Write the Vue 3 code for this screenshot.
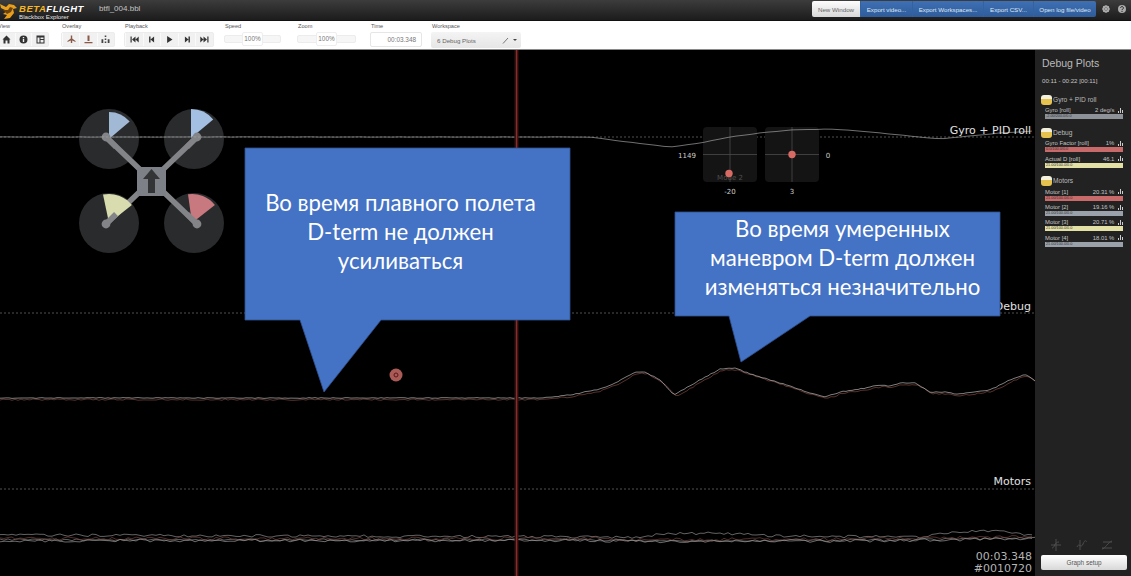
<script setup>
let seed = 12345
const rnd = () => { seed = (seed * 1664525 + 1013904223) % 4294967296; return seed / 4294967296 }

const interp = (pts, x) => {
  for (let i = 1; i < pts.length; i++) {
    if (x <= pts[i][0]) {
      const [a, b] = pts[i - 1]; const [c, d] = pts[i]
      return b + (d - b) * (x - a) / (c - a)
    }
  }
  return pts[pts.length - 1][1]
}
const trace = (pts, step, amp, off = 0, lag = 0) => {
  const out = []
  for (let x = 0; x <= 1035; x += step) {
    out.push(`${x},${(interp(pts, x - lag) + off + (rnd() - 0.5) * amp).toFixed(1)}`)
  }
  return out.join(' ')
}

const gyroPts = [[0,137],[590,137],[620,141],[670,147],[700,143],[730,137],[760,133],[790,130],[830,129],[860,131],[900,135],[940,139],[970,136],[1000,133],[1035,131]]
const debugPts = [[0,398],[540,398],[570,395],[600,389],[615,383],[635,372],[645,372],[660,380],[674,395],[700,380],[720,369],[735,368],[745,372],[770,380],[790,386],[810,393],[825,397],[840,392],[860,389],[880,385],[890,386],[900,383],[915,383],[930,392],[945,392],[955,394],[965,393],[990,390],[1010,380],[1025,374],[1035,381]]
const motorHigh = [[0,535],[600,537],[640,538],[660,534],[720,533],[770,536],[920,537],[950,532],[1000,531],[1035,536]]
const motorLow = [[0,540],[600,540],[640,541],[720,541],[900,540],[1035,538]]

const gyro = trace(gyroPts, 8, 0.3)
const debugA = trace(debugPts, 3, 0.8)
const debugB = trace(debugPts, 3, 1.5, 1.6, 2)
const motors = [
  { d: trace(motorHigh, 4, 2.6), c: '#8e8e8e' },
  { d: trace(motorLow, 4, 2.4), c: '#858585' },
  { d: trace(motorLow, 4, 3.2, -1.5), c: '#74403a' },
  { d: trace(motorLow, 5, 3, 0.5), c: '#999999' }
]

const sector = (cx, cy, r, a, b) => {
  const p = (t) => {
    const q = (t - 90) * Math.PI / 180
    return `${(cx + r * Math.cos(q)).toFixed(1)} ${(cy + r * Math.sin(q)).toFixed(1)}`
  }
  return `M${cx} ${cy}L${p(a)}A${r} ${r} 0 0 1 ${p(b)}Z`
}
const rotors = [
  { x: 109, y: 139, hx: 106, hy: 137, c: '#a2b9d6', p: sector(109, 139, 27, 0, 50) },
  { x: 194, y: 139, hx: 197, hy: 137, c: '#a3c0e3', p: sector(191, 138, 29, 0, 50) },
  { x: 109, y: 223, hx: 106, hy: 224, c: '#d9dcae', p: sector(109, 223, 29, -12, 52) },
  { x: 194, y: 223, hx: 197, hy: 224, c: '#c8797f', p: sector(192, 223, 29, -8, 52) }
]

const buttonIcons = {
  view: ['M-4 0L0 -4L4 0H3V4H1V1H-1V4H-3V0Z', 'M0 -4A4 4 0 1 0 0 4A4 4 0 1 0 0 -4ZM-.7 -2.5H.7V-1.2H-.7ZM-.7 -.4H.7V2.6H-.7Z', 'M-4 -4H4V4H-4ZM-3 -2V3H-1V-2ZM0 -2V-.5H3V-2ZM0 .5V3H3V.5Z'],
  overlay: ['M-.7 -4H.7V-1L4 1.5V2.5L.7 1V3.5H-.7V1L-4 2.5V1.5L-.7 -1Z', 'M-1 -4H1V1.5H-1ZM-4 2.5H4V3.7H-4Z', 'M-.8 -4H.8V-2.4H-.8ZM-.8 -1H.8V.6H-.8ZM-4 -.2H-2.2V3.5H-4ZM2.2 -.2H4V3.5H2.2ZM-.8 2H.8V3.5H-.8Z'],
  play: ['M-4 -3H-2.8V3H-4ZM1 -3V3L-2.5 0ZM4.2 -3V3L1 0Z', 'M-2.4 -3H-1V3H-2.4ZM2.6 -3V3L-1 0Z', 'M-2.4 -3.4L3 0L-2.4 3.4Z', 'M2.4 -3H1V3H2.4ZM-2.6 -3V3L1 0Z', 'M4 -3H2.8V3H4ZM-1 -3V3L2.5 0ZM-4.2 -3V3L-1 0Z']
}

const groups = [
  { name: 'Gyro + PID roll', rows: [{ l: 'Gyro [roll]', v: '2 deg/s', c: '#8d9299', t: '-2.00/200.0/0.0' }] },
  { name: 'Debug', rows: [
    { l: 'Gyro Factor [roll]', v: '1%', c: '#c8696a', t: '0.0/100.0/0.0' },
    { l: 'Actual D [roll]', v: '46.1', c: '#e3e0a6', t: '21.00/100.0/0.0' }
  ] },
  { name: 'Motors', rows: [
    { l: 'Motor [1]', v: '20.31 %', c: '#c8696a', t: '21.00/100.0/0.0' },
    { l: 'Motor [2]', v: '19.16 %', c: '#9aa1aa', t: '21.00/100.0/0.0' },
    { l: 'Motor [3]', v: '20.71 %', c: '#e3e0a6', t: '21.00/100.0/0.0' },
    { l: 'Motor [4]', v: '18.01 %', c: '#9aa1aa', t: '21.00/100.0/0.0' }
  ] }
]
const actions = ['Export video...', 'Export Workspaces...', 'Export CSV...', 'Open log file/video']
</script>

<template>
  <div class="app">
    <header class="topbar">
      <div class="logo">
        <svg class="bird" width="17" height="19" viewBox="0 0 17 19">
          <path d="M0 3L6 6L9 3L14 4L17 7L13 8L14 12L10 17L4 18L7 14L3 13L7 10L1 7Z" fill="#e79f1c" />
          <path d="M3 9L8 9L10 6L13 7L11 11L7 13Z" fill="#6b4310" />
        </svg>
        <div class="logo-text">
          <div class="brand"><span class="beta">BETA</span>FLIGHT</div>
          <div class="sub">Blackbox Explorer</div>
        </div>
      </div>
      <div class="file">btfl_004.bbl</div>
      <nav class="actions">
        <button class="act light">New Window</button>
        <button v-for="a in actions" :key="a" class="act blue">{{ a }}</button>
      </nav>
      <svg class="sys" width="8" height="8" viewBox="-4 -4 8 8">
        <circle r="2.6" fill="none" stroke="#aaa" stroke-width="1.7" />
        <path d="M0 -4V4M-4 0H4M-2.8 -2.8L2.8 2.8M-2.8 2.8L2.8 -2.8" stroke="#aaa" stroke-width="1" />
      </svg>
      <svg class="sys" width="8" height="8" viewBox="-4 -4 8 8">
        <circle r="4" fill="#aaa" />
        <path d="M-1.4 -1.2A1.4 1.4 0 1 1 .6 .2L0 .8V1.2M0 2V3" stroke="#222" stroke-width="1" fill="none" />
      </svg>
    </header>

    <section class="toolbar">
      <div class="tool t-view">
        <label>View</label>
        <div class="btns">
          <span v-for="(p, i) in buttonIcons.view" :key="i" class="btn">
            <svg width="9" height="9" viewBox="-4.5 -4.5 9 9"><path :d="p" fill="#333" fill-rule="evenodd" /></svg>
          </span>
        </div>
      </div>
      <div class="tool t-overlay">
        <label>Overlay</label>
        <div class="btns">
          <span v-for="(p, i) in buttonIcons.overlay" :key="i" class="btn">
            <svg width="9" height="9" viewBox="-4.5 -4.5 9 9"><path :d="p" :fill="i === 2 ? '#444' : '#8a5a48'" /></svg>
          </span>
        </div>
      </div>
      <div class="tool t-play">
        <label>Playback</label>
        <div class="btns">
          <span v-for="(p, i) in buttonIcons.play" :key="i" class="btn">
            <svg width="9" height="9" viewBox="-4.5 -4.5 9 9"><path :d="p" fill="#333" /></svg>
          </span>
        </div>
      </div>
      <div class="tool t-speed">
        <label>Speed</label>
        <div class="slider"><span class="knob">100%</span></div>
      </div>
      <div class="tool t-zoom">
        <label>Zoom</label>
        <div class="slider"><span class="knob">100%</span></div>
      </div>
      <div class="tool t-time">
        <label>Time</label>
        <div class="timebox">00:03.348</div>
      </div>
      <div class="tool t-work">
        <label>Workspace</label>
        <div class="workbox">
          <span class="wname">6 Debug Plots</span>
          <svg width="7" height="7" viewBox="0 0 7 7"><path d="M1 6.5L6 1" stroke="#777" stroke-width="1" /></svg>
          <span class="caret"></span>
        </div>
      </div>
    </section>

    <main class="main">
      <div class="canvas">
        <svg class="graph" width="1035" height="526" viewBox="0 50 1035 526">
          <g>
            <circle v-for="(r, i) in rotors" :key="'d' + i" :cx="r.x" :cy="r.y" r="30" fill="#2a2b2d" />
            <path d="M106 137L197 224M197 137L106 224" stroke="#838487" stroke-width="5.5" />
            <path v-for="(r, i) in rotors" :key="'s' + i" :d="r.p" :fill="r.c" />
            <path d="M106 137L116 147M197 137L187 147M106 224L116 214M197 224L187 214" stroke="#838487" stroke-width="5.5" />
            <circle v-for="(r, i) in rotors" :key="'h' + i" :cx="r.hx" :cy="r.hy" r="4.4" fill="#838487" />
            <rect x="137" y="167" width="29" height="29" fill="#7d8086" />
            <path d="M151.5 169L160 179H155V193H148V179H143Z" fill="#333436" />
          </g>

          <g class="dash">
            <line x1="0" y1="137" x2="1035" y2="137" />
            <line x1="0" y1="313" x2="1035" y2="313" />
            <line x1="0" y1="489" x2="1035" y2="489" />
          </g>

          <g>
            <rect x="703" y="127" width="54" height="55" rx="4" fill="#141414" />
            <rect x="765" y="127" width="54" height="55" rx="4" fill="#141414" />
            <path d="M730 127V182M703 154.5H757M792 127V182M765 154.5H819" stroke="#4a4a4a" stroke-width="0.8" />
            <text x="730" y="180" text-anchor="middle" class="stick-mode">Mode 2</text>
            <circle cx="729" cy="173.5" r="3.7" fill="#d86a66" />
            <circle cx="792" cy="154.5" r="3.7" fill="#d86a66" />
            <text x="687" y="158" text-anchor="middle" class="stick-val">1149</text>
            <text x="828" y="158" text-anchor="middle" class="stick-val">0</text>
            <text x="730" y="194" text-anchor="middle" class="stick-val">-20</text>
            <text x="792" y="194" text-anchor="middle" class="stick-val">3</text>
          </g>

          <polyline :points="gyro" class="trace" stroke="#a0a0a0" />
          <polyline :points="debugB" class="trace" stroke="#7d463d" />
          <polyline :points="debugA" class="trace" stroke="#b4b4b4" />
          <polyline v-for="(m, i) in motors" :key="i" :points="m.d" class="trace" :stroke="m.c" />

          <rect x="514.5" y="50" width="4" height="526" fill="#331212" />
          <rect x="516" y="50" width="1.2" height="526" fill="#8f2a2a" />

          <circle cx="396" cy="375" r="6.5" fill="#c86a66" fill-opacity="0.85" />
          <circle cx="396" cy="375" r="2" fill="none" stroke="#5a1818" stroke-width="1" />

          <text x="1031" y="134" text-anchor="end" class="axis">Gyro + PID roll</text>
          <text x="1031" y="310" text-anchor="end" class="axis">Debug</text>
          <text x="1031" y="485" text-anchor="end" class="axis">Motors</text>

          <polygon points="245,148 570,148 570,320 381,320 324,392 300,320 245,320" class="bubble" />
          <polygon points="675,212 1000,212 1000,316 810,316 741,362 729,316 675,316" class="bubble" />
        </svg>

        <div class="note note-a">Во время плавного полета<br />D-term не должен<br />усиливаться</div>
        <div class="note note-b">Во время умеренных<br />маневром D-term должен<br />изменяться незначительно</div>

        <div class="stamp">00:03.348<br />#0010720</div>
      </div>

      <aside class="side">
        <h2>Debug Plots</h2>
        <div class="range">00:11 - 00:22 [00:11]</div>
        <div v-for="g in groups" :key="g.name" class="group">
          <div class="ghead"><span class="gicon"></span>{{ g.name }}</div>
          <div v-for="r in g.rows" :key="r.l" class="row">
            <div class="rline">
              <span>{{ r.l }}</span>
              <span class="rval">{{ r.v }}
                <svg width="5" height="5" viewBox="0 0 5 5"><path d="M0 5V3H1V5ZM2 5V0H3V5ZM4 5V2H5V5Z" fill="#ccc" /></svg>
              </span>
            </div>
            <div class="rbar" :style="{ background: r.c }">{{ r.t }}</div>
          </div>
        </div>
        <div class="spacer"></div>
        <div class="side-icons">
          <svg width="12" height="12" viewBox="0 0 12 12"><path d="M6 0V12M1 6H11M2 9C5 9 4 3 9 3" stroke="#4d4d4d" fill="none" /></svg>
          <svg width="12" height="12" viewBox="0 0 12 12"><path d="M4 1V11M1 8C3 3 5 10 7 5S10 2 11 3" stroke="#4d4d4d" fill="none" /></svg>
          <svg width="12" height="12" viewBox="0 0 12 12"><path d="M1 9H11M2 3H11M1 10C4 10 7 3 11 2" stroke="#4d4d4d" fill="none" /></svg>
        </div>
        <button class="setup">Graph setup</button>
      </aside>
    </main>
  </div>
</template>

<style>
html, body { margin: 0; background: #000; overflow: hidden; }
</style>

<style scoped>
.app {
  width: 1131px;
  height: 576px;
  display: flex;
  flex-direction: column;
  overflow: hidden;
  font-family: "Liberation Sans", Arial, sans-serif;
  background: #000;
}
.topbar {
  height: 21px;
  box-sizing: border-box;
  flex: none;
  display: flex;
  align-items: flex-start;
  background: linear-gradient(#3c3c3c, #1c1c1c);
  border-bottom: 1px solid #111;
}
.logo { display: flex; width: 99px; height: 20px; flex: none; }
.bird { margin: 1px 2px 0 0; flex: none; }
.logo-text { color: #ddd; }
.brand {
  font-size: 9.5px;
  line-height: 10px;
  margin-top: 4px;
  font-weight: 700;
  font-style: italic;
  color: #fff;
  letter-spacing: 0.55px;
}
.beta { color: #f7b81e; }
.sub { font-size: 6.2px; line-height: 6px; color: #e4e4e4; }
.file { font-size: 8px; line-height: 18px; color: #c4c4c4; }
.actions { margin-left: auto; display: flex; margin-top: 1px; }
.act {
  height: 16px;
  padding: 0;
  border: 0;
  font: 6.2px "Liberation Sans", Arial, sans-serif;
  flex: none;
}
.act.light { width: 48px; background: linear-gradient(#fdfdfd, #d8d8d8); color: #666; border-radius: 2px 0 0 2px; }
.act.blue { background: linear-gradient(#3e70b4, #2f5c9a); color: #dfe8f4; border-left: 1px solid #34619f; }
.act.blue:nth-child(2) { width: 52px; }
.act.blue:nth-child(3) { width: 71px; }
.act.blue:nth-child(4) { width: 50px; }
.act.blue:nth-child(5) { width: 63px; border-radius: 0 2px 2px 0; }
.sys { flex: none; margin: 5px 5px 0 6px; }
.sys:last-child { margin: 5px 5px 0 3px; }

.toolbar {
  height: 29px;
  box-sizing: border-box;
  flex: none;
  background: #fff;
  border-bottom: 1px solid #8a8a8a;
  display: flex;
  color: #555;
}
.tool { display: flex; flex-direction: column; flex: none; }
.tool label { font-size: 5.6px; line-height: 6px; margin: 2px 0 3px 1px; height: 6px; color: #555; }
.t-view { width: 52px; margin-left: -3px; margin-right: 12px; }
.t-overlay { width: 54px; margin-right: 9px; }
.t-play { width: 90px; margin-right: 10px; }
.t-speed { width: 57px; margin-right: 16px; }
.t-zoom { width: 59px; margin-right: 14px; }
.t-time { width: 52px; margin-right: 9px; }
.t-work { width: 90px; }
.btns { display: flex; height: 15px; background: #f1f1f1; border-radius: 2px; border: 1px solid #ececec; box-sizing: border-box; }
.btn { flex: 1; display: flex; align-items: center; justify-content: center; border-left: 1px solid #fafafa; }
.slider {
  position: relative;
  height: 8px;
  margin-top: 3px;
  background: #f6f6f6;
  border: 1px solid #ececec;
  border-radius: 2px;
  box-sizing: border-box;
  display: flex;
  justify-content: center;
}
.knob {
  margin-top: -4px;
  width: 19px;
  height: 12px;
  background: #fff;
  border: 1px solid #eee;
  border-radius: 2px;
  font-size: 6.4px;
  line-height: 12px;
  text-align: center;
  color: #777;
  flex: none;
}
.timebox {
  height: 15px;
  box-sizing: border-box;
  border: 1px solid #e6e6e6;
  border-radius: 2px;
  font-size: 6.4px;
  line-height: 13px;
  text-align: right;
  padding-right: 5px;
  color: #777;
}
.workbox {
  height: 16px;
  box-sizing: border-box;
  background: linear-gradient(#f4f4f4, #e6e6e6);
  border-radius: 2px;
  display: flex;
  align-items: center;
  gap: 4px;
  padding: 0 4px 0 6px;
  font-size: 6.2px;
  color: #666;
}
.wname { flex: 1; }
.caret { width: 0; height: 0; border: 2px solid transparent; border-top: 2.5px solid #444; margin-top: 2px; }

.main { flex: 1; display: flex; min-height: 0; }
.canvas { position: relative; width: 1035px; flex: none; background: #000; overflow: hidden; }
.graph { display: block; }
.dash line { stroke: #666; stroke-width: 0.8; stroke-dasharray: 2 2; }
.trace { fill: none; stroke-width: 0.7; }
.axis { fill: #e0e0e0; font: 11px "DejaVu Sans", sans-serif; }
.stick-val { fill: #cfcfcf; font: 7px "DejaVu Sans", sans-serif; }
.stick-mode { fill: #4f4f4f; font: 7px "DejaVu Sans", sans-serif; }
.bubble { fill: #4472c4; stroke: #2f528f; stroke-width: 0.8; }
.note {
  position: absolute;
  color: #fff;
  font-family: Lato, "Noto Sans", sans-serif;
  text-align: center;
  font-size: 22.2px;
  line-height: 29px;
}
.note-a { left: 238px; top: 138px; width: 325px; }
.note-b { left: 680px; top: 164px; width: 325px; }
.stamp {
  position: absolute;
  right: 3px;
  bottom: 2px;
  color: #b4b4b4;
  text-align: right;
  font: 11px/11.5px "DejaVu Sans", sans-serif;
}

.side {
  width: 96px;
  flex: none;
  box-sizing: border-box;
  background: #222;
  padding: 7px 9px 6px 6px;
  display: flex;
  flex-direction: column;
  color: #bbb;
}
.side h2 { margin: 0; font-size: 10.5px; font-weight: 400; line-height: 13px; margin-left: 1px; white-space: nowrap; }
.range { font-size: 6.1px; line-height: 7px; margin: 7px 0 7px 1px; white-space: nowrap; color: #c4c4c4; }
.group { margin-bottom: 3px; margin-top: 3px; }
.ghead { font-size: 6.6px; line-height: 10px; display: flex; align-items: center; gap: 1px; height: 11px; margin-bottom: 1px; white-space: nowrap; }
.gicon {
  width: 11px;
  height: 10px;
  flex: none;
  border-radius: 3px;
  background: linear-gradient(#f3f0de 0 40%, #e6c24f 40%);
}
.row { margin-left: 4px; height: 15.3px; }
.rline { display: flex; justify-content: space-between; font-size: 5.9px; line-height: 8px; height: 8px; white-space: nowrap; color: #c4c4c4; width: 78px; }
.rval svg { vertical-align: -0.5px; margin-left: 2px; }
.rbar { height: 5px; width: 78px; color: #333; font-size: 3.8px; line-height: 5px; overflow: hidden; white-space: nowrap; padding-left: 1px; box-sizing: border-box; }
.spacer { flex: 1; }
.side-icons { display: flex; justify-content: space-between; padding: 0 9px 0 9px; margin-bottom: 4px; }
.setup {
  width: 86px;
  height: 15px;
  padding: 0;
  border: 0;
  border-radius: 2px;
  background: linear-gradient(#ffffff, #d8d8d8);
  color: #555;
  font: 6.4px "Liberation Sans", Arial, sans-serif;
  flex: none;
}
</style>
